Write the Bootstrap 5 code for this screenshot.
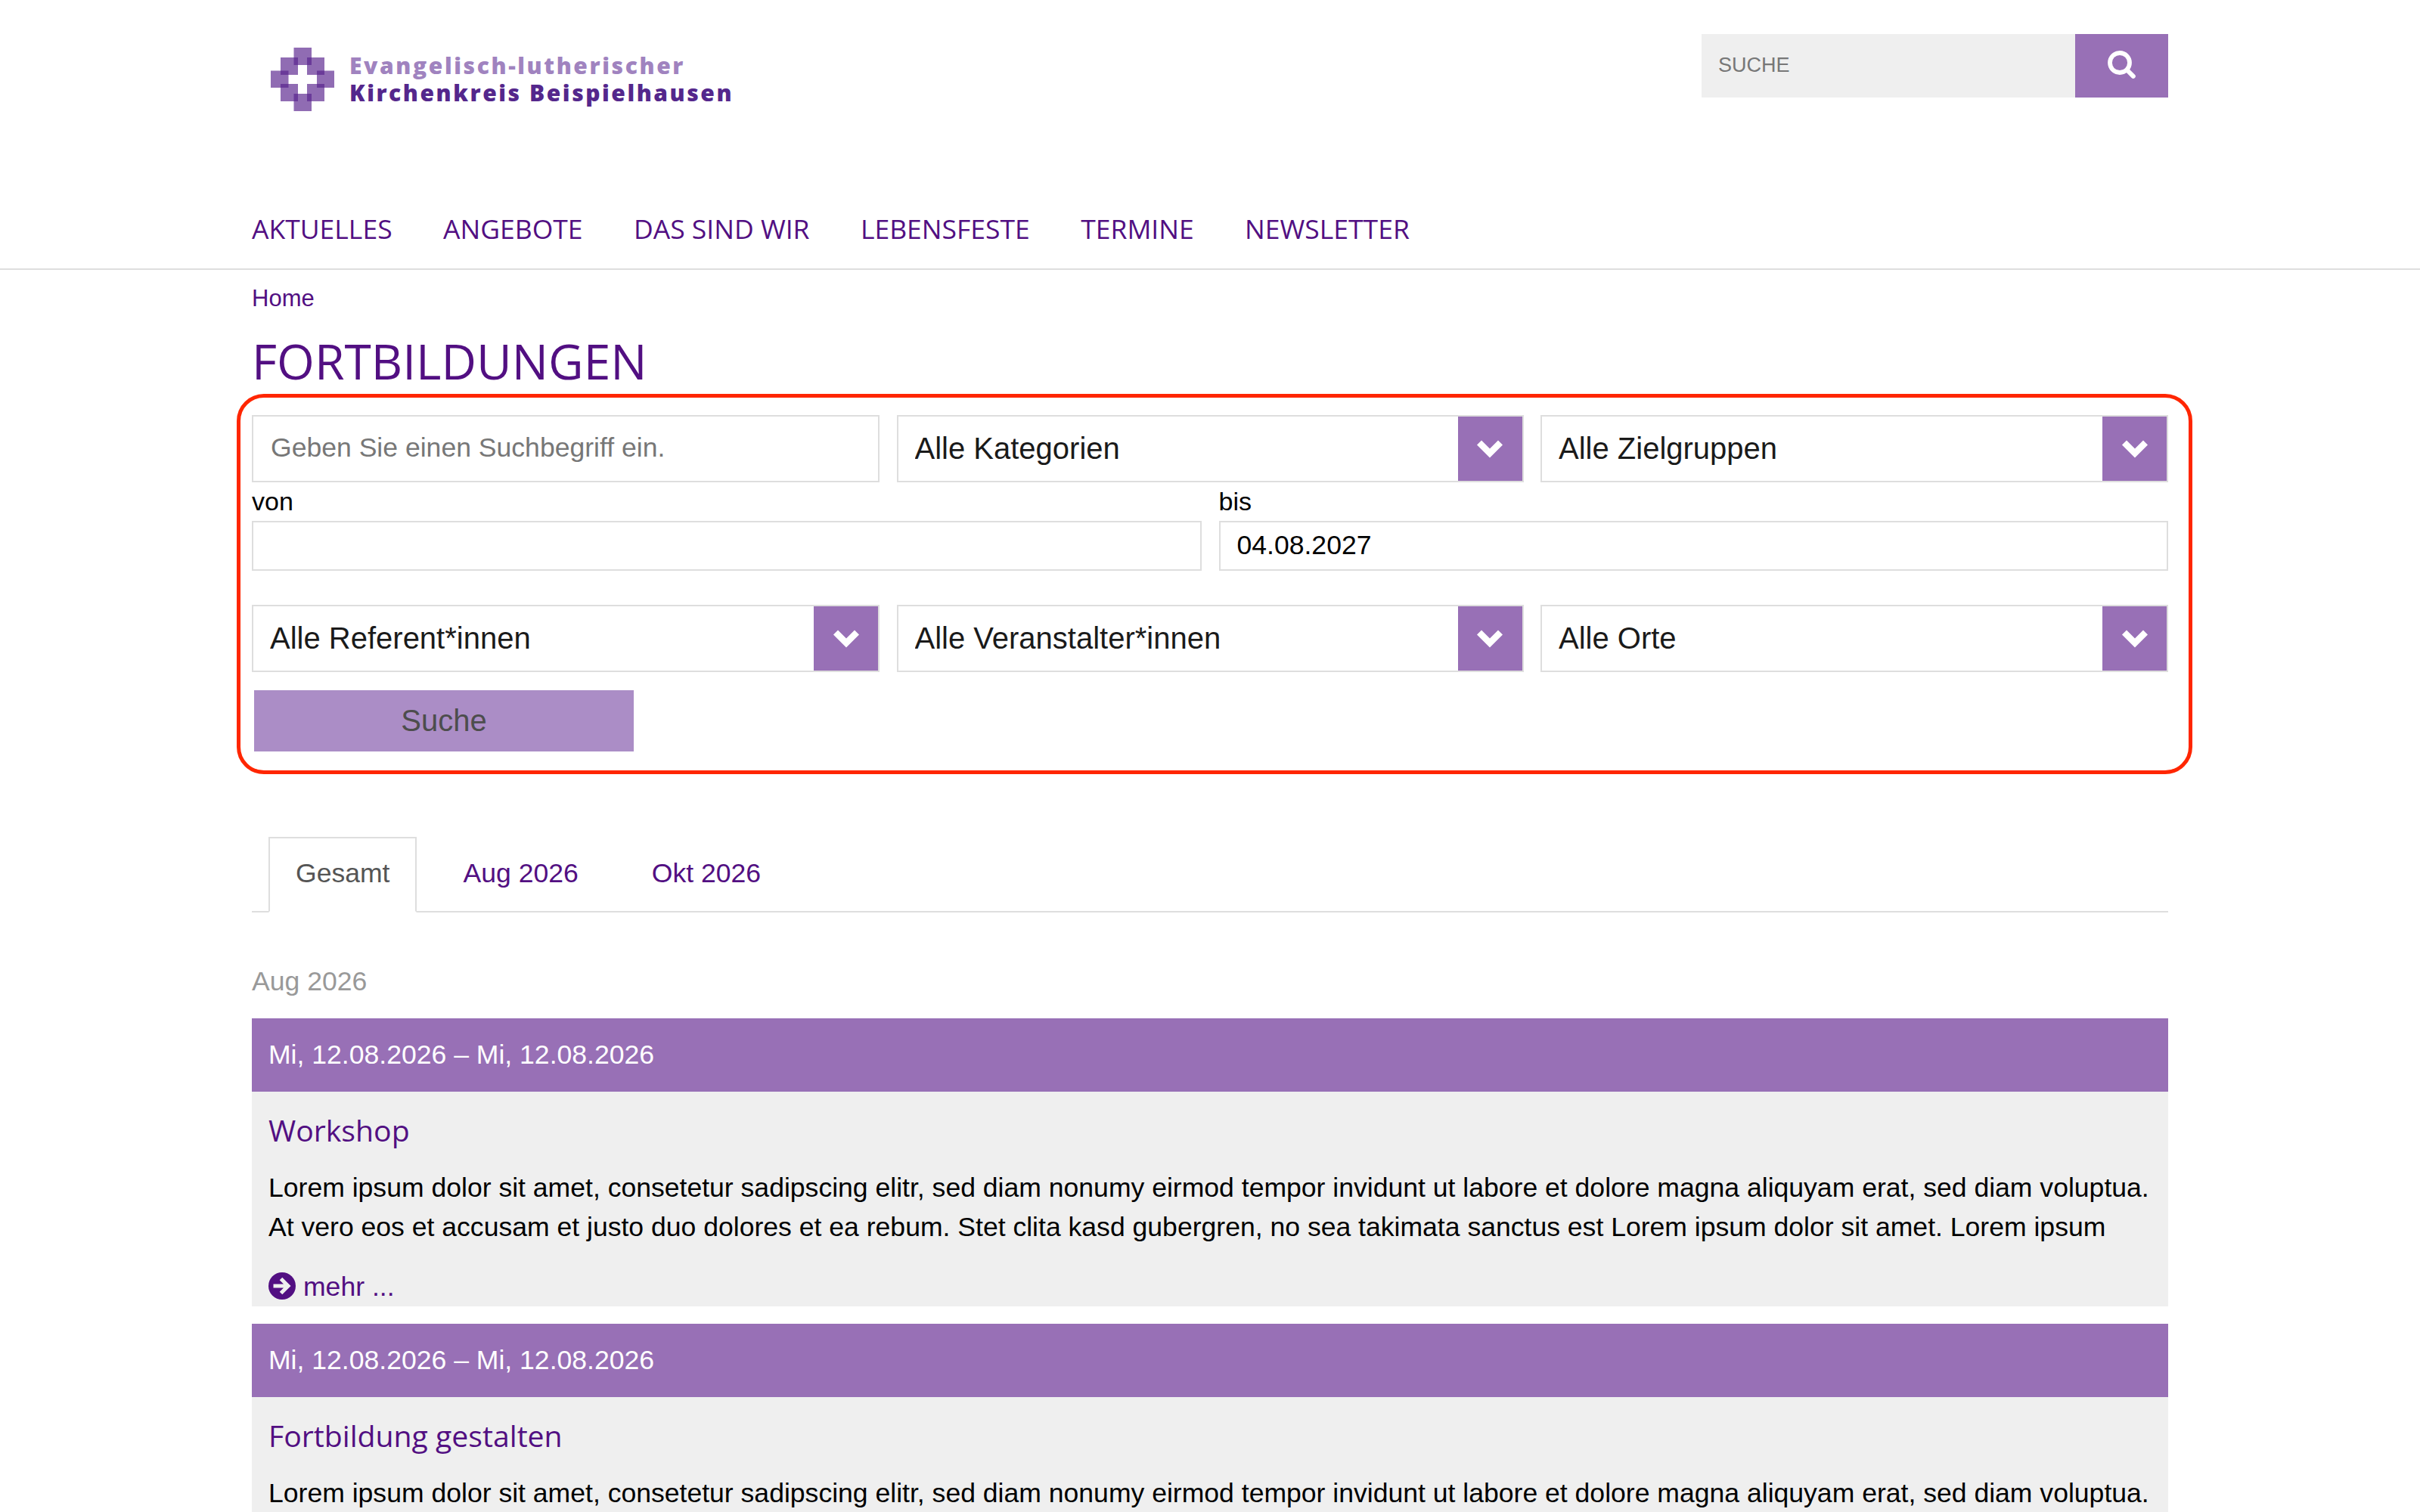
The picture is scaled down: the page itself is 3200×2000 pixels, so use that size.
<!DOCTYPE html>
<html lang="de">
<head>
<meta charset="utf-8">
<title>Fortbildungen</title>
<link href="https://cdn.jsdelivr.net/npm/bootstrap@5.3.0/dist/css/bootstrap.min.css" rel="stylesheet">
<style>
:root{--violet:#520f82;--lilac:#9870b6;--line:#dedede}
body{font-family:"Liberation Sans",Arial,sans-serif;font-size:35.57px;color:#000;background:#fff;height:2000px;overflow:hidden}
a{color:var(--violet);text-decoration:none}
.wrap{width:2534px;margin:0 auto}
main.wrap{height:1643px;overflow:hidden;width:2614px;padding:0 40px}
.os{font-family:"Open Sans",sans-serif}
.site-head{height:277px;padding-top:45px}
.brand{margin:18px 0 0 25px;gap:20px}
.brand svg{width:84px;height:84px}
.brand-text{font-family:"Open Sans",sans-serif;font-weight:800;font-size:30px;line-height:35.5px;padding-top:6px;color:#54278c;white-space:nowrap}
.brand-text .l1{color:#a083bf;letter-spacing:2.6px}
.brand-text .l2{letter-spacing:2.55px}
.search-box{width:617px;height:84px}
.search-box .form-control{background:#efefef;border:0;font-size:27px;padding:0 22px 1px;color:#777}
.form-control::placeholder{color:#777;opacity:1}
.search-box .btn{width:123px;background:var(--lilac);border:0;padding:0 0 2px}
.search-box,.search-box *,.fld,.fld *{border-radius:0!important}
.main-nav{gap:67.4px;height:77.5px;line-height:51px;font-size:35.5px;white-space:nowrap}
.rule{border-bottom:2px solid var(--line)}
.crumb{font-size:31px;line-height:40px;padding-top:18px}
h1.title{font-size:64.1px;line-height:70px;color:var(--violet);margin:27.5px 0 9px;font-weight:400}
.filter{margin:0 -32px 0 -20px;border:5px solid #ff2600;border-radius:36px;height:503px;padding:23px 27px 0 15px}
.tri{display:grid;grid-template-columns:830px 829px 830px;column-gap:22.5px}
.tri-lower{margin-top:45px}
.duo{display:grid;grid-template-columns:1fr 1fr;column-gap:23px}
.fld{border:2px solid var(--line);background:#fff;height:89px}
.fld .form-control,.fld .form-select{border:0;padding:0 22px 2px 23px;background:none;color:#000;box-shadow:none}
.fld .form-control{font-size:35.57px}
.fld .form-select{font-size:40px;color:#1a1a1a;padding-left:22px}
.drop{width:85px;background:var(--lilac)}
.drop svg{width:38px;height:26px}
.lbl{font-size:34px;line-height:40px;margin:5px 0 6px}
.low{height:66px}
.low .form-control{padding:0 22px}
.go{width:502px;height:81px;background:#ab8dc6;color:#4d4d4d;font-size:40px;border:0;border-radius:0;margin:24px 0 0 3px;padding:0 0 1px}
.nav-tabs{margin-top:83px;padding-left:22px;gap:26px;border-bottom:2px solid var(--line);height:100px}
.nav-tabs .nav-link{border:2px solid transparent;border-radius:0;margin-bottom:-2px;padding:21px 33px 0 34px;line-height:50px;height:100px;color:var(--violet)}
.nav-tabs .nav-link.active{color:#555;border-color:var(--line) var(--line) #fff}
.month{color:#999;line-height:50px;margin:66px 0 24px}
.event{margin-bottom:23px}
.event-date{background:var(--lilac);color:#fff;height:97px;line-height:50px;padding:23px 22px 0}
.event-body{background:#efefef;height:284px;padding:24px 22px 0}
.event-body h2{font-size:39.2px;line-height:54px;margin:0 0 23px;font-weight:400;color:var(--violet)}
.event-body p{line-height:52px;margin:0 0 28px;white-space:nowrap}
.more{line-height:50px;gap:10px}
.more svg{width:36px;height:36px;margin-bottom:3px}
</style>
<script src="https://cdn.jsdelivr.net/npm/bootstrap@5.3.0/dist/js/bootstrap.bundle.min.js"></script>
</head>
<body>
<svg class="d-none">
  <symbol id="chev" viewBox="0 0 38 26"><path d="M5 4.5 19 18.5 33 4.5" fill="none" stroke="#fff" stroke-width="8.5" stroke-linejoin="miter"/></symbol>
  <symbol id="arr" viewBox="0 0 36 36"><circle cx="18" cy="18" r="18" fill="#520f82"/><path d="M6.500 18H25M16.500 8.500 26 18 16.500 27.500" fill="none" stroke="#efefef" stroke-width="5"/></symbol>
</svg>
<header class="rule">
  <div class="wrap">
    <div class="site-head d-flex justify-content-between align-items-start">
      <a href="#" class="brand d-flex">
        <svg viewBox="0 0 84 84" fill="#56208c" fill-opacity=".66"><path d="M30.500 0h23.500v23h-23.500z"/><path d="M13 13h23v23h-23z"/><path d="M48 13h23v23h-23z"/><path d="M0 30.500h23.500v22.500h-23.500z"/><path d="M61 30.500h23v22.500h-23z"/><path d="M13 48h23v23h-23z"/><path d="M48 48h23v23h-23z"/><path d="M30.500 61h23.500v23h-23.500z"/></svg>
        <span class="brand-text"><span class="l1">Evangelisch-lutherischer</span><br><span class="l2">Kirchenkreis Beispielhausen</span></span>
      </a>
      <form class="search-box input-group flex-nowrap">
        <input class="form-control" placeholder="SUCHE">
        <button class="btn" type="button"><svg width="40" height="40" viewBox="0 0 40 40"><circle cx="17" cy="17" r="13" fill="none" stroke="#fff" stroke-width="5.800"/><path d="M26.500 26.500 34.800 34.800" stroke="#fff" stroke-width="6" stroke-linecap="round"/></svg></button>
      </form>
    </div>
    <nav class="main-nav d-flex os">
      <a href="#">AKTUELLES</a><a href="#">ANGEBOTE</a><a href="#">DAS SIND WIR</a><a href="#">LEBENSFESTE</a><a href="#">TERMINE</a><a href="#">NEWSLETTER</a>
    </nav>
  </div>
</header>
<main class="wrap">
  <div class="crumb"><a href="#">Home</a></div>
  <h1 class="title os">FORTBILDUNGEN</h1>
  <form class="filter">
    <div class="tri">
      <div class="fld d-flex"><input class="form-control" placeholder="Geben Sie einen Suchbegriff ein."></div>
      <div class="fld d-flex"><select class="form-select"><option>Alle Kategorien</option></select><span class="drop d-flex flex-shrink-0 align-items-center justify-content-center"><svg><use href="#chev"/></svg></span></div>
      <div class="fld d-flex"><select class="form-select"><option>Alle Zielgruppen</option></select><span class="drop d-flex flex-shrink-0 align-items-center justify-content-center"><svg><use href="#chev"/></svg></span></div>
    </div>
    <div class="duo">
      <div><div class="lbl">von</div><div class="fld low d-flex"><input class="form-control"></div></div>
      <div><div class="lbl">bis</div><div class="fld low d-flex"><input class="form-control" value="04.08.2027"></div></div>
    </div>
    <div class="tri tri-lower">
      <div class="fld d-flex"><select class="form-select"><option>Alle Referent*innen</option></select><span class="drop d-flex flex-shrink-0 align-items-center justify-content-center"><svg><use href="#chev"/></svg></span></div>
      <div class="fld d-flex"><select class="form-select"><option>Alle Veranstalter*innen</option></select><span class="drop d-flex flex-shrink-0 align-items-center justify-content-center"><svg><use href="#chev"/></svg></span></div>
      <div class="fld d-flex"><select class="form-select"><option>Alle Orte</option></select><span class="drop d-flex flex-shrink-0 align-items-center justify-content-center"><svg><use href="#chev"/></svg></span></div>
    </div>
    <button class="btn go" type="button">Suche</button>
  </form>
  <ul class="nav nav-tabs">
    <li class="nav-item"><a class="nav-link active" href="#">Gesamt</a></li>
    <li class="nav-item"><a class="nav-link" href="#">Aug 2026</a></li>
    <li class="nav-item"><a class="nav-link" href="#">Okt 2026</a></li>
  </ul>
  <div class="month">Aug 2026</div>
  <article class="event">
    <div class="event-date">Mi, 12.08.2026 – Mi, 12.08.2026</div>
    <div class="event-body">
      <h2 class="os">Workshop</h2>
      <p>Lorem ipsum dolor sit amet, consetetur sadipscing elitr, sed diam nonumy eirmod tempor invidunt ut labore et dolore magna aliquyam erat, sed diam voluptua.<br>At vero eos et accusam et justo duo dolores et ea rebum. Stet clita kasd gubergren, no sea takimata sanctus est Lorem ipsum dolor sit amet. Lorem ipsum</p>
      <a href="#" class="more d-flex align-items-center"><svg><use href="#arr"/></svg><span>mehr ...</span></a>
    </div>
  </article>
  <article class="event">
    <div class="event-date">Mi, 12.08.2026 – Mi, 12.08.2026</div>
    <div class="event-body">
      <h2 class="os">Fortbildung gestalten</h2>
      <p>Lorem ipsum dolor sit amet, consetetur sadipscing elitr, sed diam nonumy eirmod tempor invidunt ut labore et dolore magna aliquyam erat, sed diam voluptua.</p>
    </div>
  </article>
</main>
</body>
</html>
